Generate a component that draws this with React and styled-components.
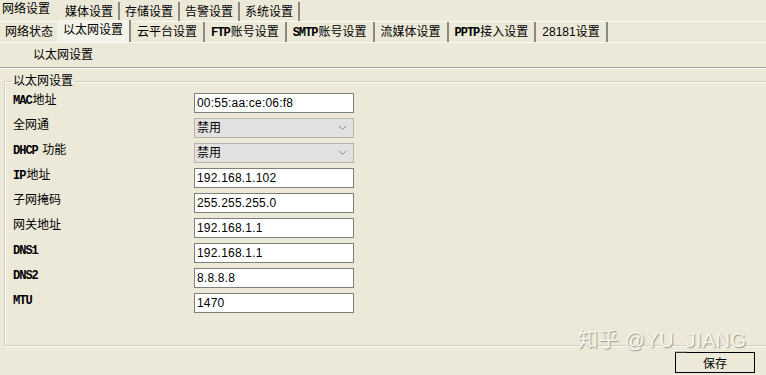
import React from "react";
import styled, { createGlobalStyle } from "styled-components";

const GlobalStyle = createGlobalStyle`
  html, body {
    margin: 0;
    padding: 0;
    background: #ece9d8;
  }
  body {
    font-family: "Liberation Sans", "Noto Sans CJK SC", sans-serif;
    font-size: 12px;
    color: #000;
  }
`;

const Page = styled.div`
  width: 766px;
  height: 375px;
  display: flex;
  flex-direction: column;
  position: relative;
  overflow: hidden;
  background: #ece9d8;
`;

const TabRow = styled.div`
  display: flex;
  align-items: flex-end;
  height: 21px;
`;

const Tab = styled.div`
  height: ${(p) => (p.active ? "21px" : "19px")};
  line-height: ${(p) => (p.active ? "19px" : "20px")};
  padding: 0 ${(p) => (p.active ? "8px 0 2px" : "5px")};
  border-right: 2px solid ${(p) => (p.active ? "transparent" : "#8c8b82")};
  white-space: nowrap;
`;

const SubTabRow = styled.div`
  display: flex;
  align-items: stretch;
  height: 20px;
  border-top: 1px solid #fbfaf4;
  border-bottom: 1px solid #fbfaf4;
`;

const SubTab = styled.div`
  line-height: 20px;
  padding: ${(p) => (p.first ? "0 4px 0 5px" : "0 6px")};
  margin-top: ${(p) => (p.active ? "-2px" : "0")};
  background: ${(p) => (p.active ? "#f4f3ea" : "transparent")};
  border-right: ${(p) => (p.plain ? "none" : "2px solid #8c8b82")};
  white-space: nowrap;
`;

const SectionTitle = styled.div`
  padding: 4px 0 0 33px;
  height: 20px;
  line-height: 16px;
`;

const Divider = styled.div`
  height: 1px;
  background: #a8a696;
  border-bottom: 1px solid #fbfaf4;
`;

const Group = styled.fieldset`
  margin: 5px -20px 0 4px;
  padding: 5px 0 32px 8px;
  border: 1px solid #d2d0c0;
  border-right: none;
  box-shadow: inset 1px 1px 0 #fbfaf4, 0 1px 0 #fbfaf4;
  display: flex;
  flex-direction: column;
  gap: 5px;
  min-width: 0;
`;

const Legend = styled.legend`
  padding: 0 1px;
  margin-left: -1px;
  line-height: 14px;
`;

const Row = styled.div`
  display: flex;
  align-items: flex-start;
  height: 20px;
`;

const Label = styled.div`
  width: 181px;
  line-height: 12px;
  padding-top: 1px;
  white-space: nowrap;
`;

const Latin = styled.span`
  font-family: "Liberation Mono", monospace;
  font-size: 12px;
  font-weight: bold;
  letter-spacing: -1px;
  margin-right: 1px;
`;

const TextBox = styled.div`
  box-sizing: border-box;
  width: 160px;
  height: 20px;
  border: 1px solid #7f7e78;
  background: #fff;
  padding: 0 2px;
  line-height: 18px;
  letter-spacing: 0.2px;
`;

const SelectBox = styled.div`
  box-sizing: border-box;
  width: 160px;
  height: 20px;
  border: 1px solid #b5b3aa;
  background: #e2e1e0;
  padding: 0 6px 0 2px;
  line-height: 18px;
  display: flex;
  justify-content: space-between;
  align-items: center;
`;

const Footer = styled.div`
  flex: 1;
  display: flex;
  justify-content: flex-end;
  align-items: flex-end;
  padding: 0 11px 2px 0;
`;

const SaveButton = styled.button`
  box-sizing: border-box;
  width: 80px;
  height: 21px;
  border: 1px solid #000;
  background: #ece9d8;
  font-family: "Noto Sans CJK SC", sans-serif;
  font-size: 12px;
  line-height: 19px;
  padding: 0;
`;

const Watermark = styled.div`
  position: absolute;
  left: 578px;
  top: 328px;
  font-family: "Liberation Sans", "Noto Sans CJK SC", sans-serif;
  font-size: 20px;
  line-height: 24px;
  color: #f6f5ef;
  text-shadow: 1px 1px 1px #9a9990;
  letter-spacing: 0.4px;
  white-space: nowrap;
`;

const Chevron = () => (
  <svg width="9" height="6" viewBox="0 0 9 6">
    <path d="M1 1 L4.5 4.5 L8 1" fill="none" stroke="#8a8a8a" strokeWidth="1" />
  </svg>
);

const topTabs = ["网络设置", "媒体设置", "存储设置", "告警设置", "系统设置"];

const fields = [
  { label: <><Latin>MAC</Latin>地址</>, value: "00:55:aa:ce:06:f8" },
  { label: "全网通", value: "禁用", select: true },
  { label: <><Latin>DHCP</Latin> 功能</>, value: "禁用", select: true },
  { label: <><Latin>IP</Latin>地址</>, value: "192.168.1.102" },
  { label: "子网掩码", value: "255.255.255.0" },
  { label: "网关地址", value: "192.168.1.1" },
  { label: <Latin>DNS1</Latin>, value: "192.168.1.1" },
  { label: <Latin>DNS2</Latin>, value: "8.8.8.8" },
  { label: <Latin>MTU</Latin>, value: "1470" },
];

export default function App() {
  return (
    <Page>
      <GlobalStyle />
      <TabRow>
        {topTabs.map((t, i) => (
          <Tab key={t} active={i === 0}>
            {t}
          </Tab>
        ))}
      </TabRow>
      <SubTabRow>
        <SubTab first plain>网络状态</SubTab>
        <SubTab active>以太网设置</SubTab>
        <SubTab>云平台设置</SubTab>
        <SubTab><Latin>FTP</Latin>账号设置</SubTab>
        <SubTab><Latin>SMTP</Latin>账号设置</SubTab>
        <SubTab>流媒体设置</SubTab>
        <SubTab><Latin>PPTP</Latin>接入设置</SubTab>
        <SubTab>28181设置</SubTab>
      </SubTabRow>
      <SectionTitle>以太网设置</SectionTitle>
      <Divider />
      <Group>
        <Legend>以太网设置</Legend>
        {fields.map((f, i) => (
          <Row key={i}>
            <Label>{f.label}</Label>
            {f.select ? (
              <SelectBox>
                <span>{f.value}</span>
                <Chevron />
              </SelectBox>
            ) : (
              <TextBox>{f.value}</TextBox>
            )}
          </Row>
        ))}
      </Group>
      <Footer>
        <SaveButton>保存</SaveButton>
      </Footer>
      <Watermark>知乎 @YU_JIANG</Watermark>
    </Page>
  );
}
